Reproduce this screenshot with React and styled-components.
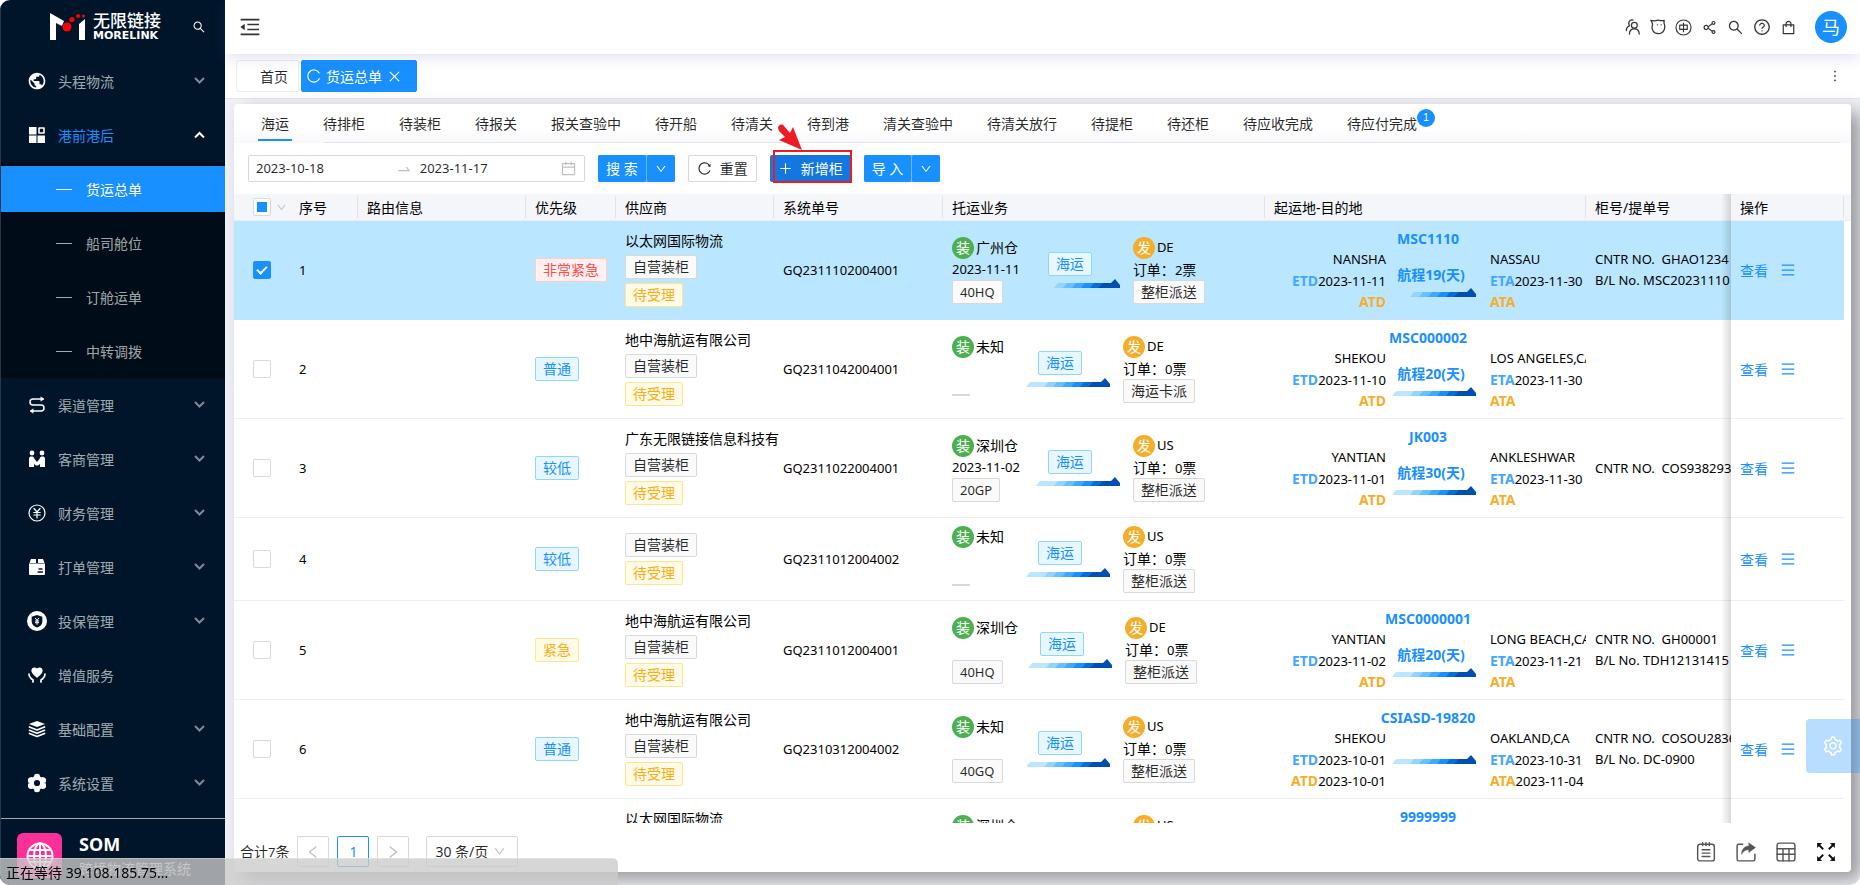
import React, { useEffect, useRef } from 'react';
import styled, { createGlobalStyle, css } from 'styled-components';
import {
  AiOutlineMenuFold, AiOutlineSearch, AiOutlineShareAlt, AiOutlineQuestionCircle, AiOutlineShopping,
  AiOutlineReload, AiOutlineClose, AiOutlinePlus, AiOutlineDown, AiOutlineCalendar, AiOutlineSwapRight,
  AiOutlineMore, AiOutlineSetting, AiOutlineMenu, AiOutlineLeft, AiOutlineRight,
} from 'react-icons/ai';
import { MdPublic } from 'react-icons/md';

const BLUE = '#1890ff';

const Global = createGlobalStyle`
  *, *::before, *::after { box-sizing: border-box; }
  body { margin: 0; background: #fff; font-family: "Noto Sans", "Noto Sans CJK SC", sans-serif; font-size: 14px; line-height: 21px; color: rgba(0,0,0,.85); }
  button, input, select { font: inherit; color: inherit; margin: 0; padding: 0; border: 0; background: none; }
  button { cursor: pointer; }
  a { color: inherit; text-decoration: none; }
  ul { list-style: none; margin: 0; padding: 0; }
  svg { display: block; flex: none; }
`;

const Page = styled.div`
  display: flex;
  height: 100vh;
  overflow: hidden;
  border-radius: 10px;
`;

/* ---------- sidebar ---------- */
const Sidebar = styled.aside`
  flex: none;
  width: 225px;
  display: flex;
  flex-direction: column;
  background: #001529;
  border-left: 1px solid #26384a;
  color: #fff;
`;
const Brand = styled.div`
  display: flex;
  align-items: center;
  height: 54px;
  padding: 0 19px 0 48px;
  gap: 7px;
`;
const BrandText = styled.div`
  flex: 1;
  display: flex;
  flex-direction: column;
  white-space: nowrap;
`;
const BrandName = styled.span`
  font-size: 17px;
  line-height: 18px;
  font-weight: 500;
`;
const BrandLatin = styled.span`
  font: bold 11px/12px "DejaVu Sans", sans-serif;
`;
const Menu = styled.nav`
  flex: 1;
`;
const MenuItem = styled.button`
  display: flex;
  align-items: center;
  width: 100%;
  height: 54px;
  padding: 0 20px 0 26px;
  text-align: left;
  color: ${(p) => (p.$open ? BLUE : 'rgba(255,255,255,.65)')};
`;
const MenuIcon = styled.span`
  display: flex;
  justify-content: center;
  width: 20px;
  margin-right: 11px;
  color: #fff;
`;
const MenuLabel = styled.span`
  flex: 1;
`;
const MenuArrow = styled.span`
  color: ${(p) => (p.$open ? '#fff' : '#7f8a94')};
`;
const SubMenu = styled.ul`
  display: grid;
  gap: 8px;
  padding: 4px 0;
  background: #000c17;
`;
const SubLink = styled.a`
  display: flex;
  align-items: center;
  gap: 14px;
  height: 46px;
  padding-left: 55px;
  color: ${(p) => (p.$active ? '#fff' : 'rgba(255,255,255,.65)')};
  background: ${(p) => (p.$active ? BLUE : 'transparent')};
  &::before {
    content: '';
    width: 16px;
    height: 1px;
    background: currentColor;
  }
`;
const System = styled.div`
  display: flex;
  gap: 17px;
  height: 67px;
  padding: 14px 0 0 16px;
  border-top: 1px solid #a6a6a6;
  white-space: nowrap;
`;
const SystemLogo = styled.div`
  display: grid;
  place-items: center;
  width: 45px;
  height: 45px;
  border-radius: 6px;
  background: #fb3199;
`;
const SystemText = styled.div`
  display: flex;
  flex-direction: column;
  gap: 3px;
`;
const SystemName = styled.strong`
  font-size: 18px;
  line-height: 22px;
`;
const SystemDesc = styled.span`
  color: #b4b8bc;
`;

/* ---------- top area ---------- */
const Main = styled.div`
  flex: 1;
  min-width: 0;
  display: flex;
  flex-direction: column;
  background: #f0f1f6;
`;
const TopBar = styled.header`
  position: relative;
  z-index: 1;
  display: flex;
  align-items: center;
  justify-content: space-between;
  height: 54px;
  padding: 0 13px;
  background: #fff;
  box-shadow: 0 3px 14px rgba(80,80,180,.18);
`;
const TopTools = styled.div`
  display: flex;
  align-items: center;
  gap: 9px;
`;
const IconButton = styled.button`
  display: grid;
  place-items: center;
  color: ${(p) => p.$color || '#333'};
`;
const Avatar = styled.button`
  width: 32px;
  height: 32px;
  margin-left: 9px;
  border-radius: 50%;
  background: ${BLUE};
  color: #fff;
  font-size: 18px;
`;
const PageTabs = styled.nav`
  display: flex;
  align-items: center;
  gap: 2px;
  height: 45px;
  padding: 0 17px 0 11px;
  background: #fff;
  border-bottom: 1px solid #e2e3ee;
`;
const PageTab = styled.a`
  display: flex;
  align-items: center;
  gap: 5px;
  height: 32px;
  border: 1px solid ${(p) => (p.$active ? BLUE : '#ededf2')};
  border-radius: 2px;
  background: ${(p) => (p.$active ? BLUE : '#fff')};
  color: ${(p) => (p.$active ? '#fff' : 'inherit')};
  padding: ${(p) => (p.$active ? '0 14px 0 5px' : '0 10px 0 23px')};
`;
const Spacer = styled.div`
  flex: 1;
`;

/* ---------- card ---------- */
const Card = styled.main`
  flex: 1;
  min-height: 0;
  display: flex;
  flex-direction: column;
  margin: 5px 9px 13px;
  background: #fff;
  border-radius: 4px;
  box-shadow: 10px 8px 18px rgba(0,0,0,.36);
`;
const StatusTabs = styled.div`
  position: relative;
  flex: none;
  display: flex;
  gap: 28px;
  height: 39px;
  padding: 0 24px;
  border-radius: 4px 4px 0 0;
  background: linear-gradient(#fff 60%, #f8f8fb);
  &::after {
    content: '';
    position: absolute;
    left: 90px;
    right: 11px;
    bottom: 0;
    border-bottom: 1px solid #e4e4ee;
  }
`;
const StatusTab = styled.button`
  position: relative;
  height: 37px;
  padding: 4px 3px 0;
  white-space: nowrap;
  border-bottom: 2px solid ${(p) => (p.$active ? BLUE : 'transparent')};
`;
const CountBadge = styled.sup`
  position: absolute;
  top: 5px;
  right: -15px;
  width: 18px;
  height: 18px;
  border-radius: 9px;
  background: ${BLUE};
  color: #fff;
  font: 10px/18px "Liberation Sans", sans-serif;
  text-align: center;
`;
const Toolbar = styled.form`
  flex: none;
  display: flex;
  align-items: center;
  gap: 13px;
  height: 51px;
  padding: 0 14px;
`;
const DateRange = styled.div`
  display: flex;
  align-items: center;
  width: 337px;
  height: 27px;
  padding: 0 7px;
  border: 1px solid #d9d9d9;
  border-radius: 2px;
  color: #bfbfbf;
`;
const DateInput = styled.input`
  flex: 0 1 144px;
  min-width: 0;
  font-size: 13px;
  color: rgba(0,0,0,.85);
  outline: 0;
`;
const RangeArrow = styled.span`
  width: 24px;
`;
const primary = css`
  background: ${(p) => (p.$dark ? '#1277e0' : BLUE)};
  color: #fff;
  box-shadow: 0 2px 0 rgba(0,0,0,.04);
`;
const Button = styled.button`
  display: flex;
  align-items: center;
  justify-content: center;
  height: 27px;
  padding: 0 8px;
  gap: 8px;
  border-radius: 2px;
  white-space: nowrap;
  ${(p) => (p.$primary ? primary : css`border: 1px solid #d9d9d9;`)}
`;
const SplitButton = styled.div`
  display: flex;
  gap: 1px;
  background: #6bb8ff;
  border-radius: 2px;
`;
const Highlighted = styled.div`
  position: relative;
`;
const HighlightFrame = styled.span`
  position: absolute;
  inset: -5px -1px -1px 3px;
  border: 2px solid #ec1c24;
  pointer-events: none;
`;
const Pointer = styled.svg`
  position: absolute;
  left: 8px;
  top: -31px;
  pointer-events: none;
`;

/* ---------- table ---------- */
const TableArea = styled.div`
  flex: 1;
  min-height: 0;
  overflow: hidden;
`;
const Table = styled.table`
  width: 100%;
  table-layout: fixed;
  border-collapse: separate;
  border-spacing: 0;
  color: #000;
`;
const Col = styled.col`
  width: ${(p) => (p.$w ? `${p.$w}px` : 'auto')};
`;
const pinnedEdge = css`
  position: relative;
  &::before {
    content: '';
    position: absolute;
    top: 0;
    bottom: -1px;
    left: -10px;
    width: 10px;
    background: linear-gradient(to right, transparent, rgba(0,0,0,.14));
  }
`;
const Th = styled.th`
  position: relative;
  height: 27px;
  padding: 0 0 0 9px;
  background: #f5f6fa;
  border-bottom: 1px solid #ececf0;
  font-weight: 400;
  text-align: left;
  white-space: nowrap;
  ${(p) => p.$divider && css`
    &::after {
      content: '';
      position: absolute;
      right: 0;
      top: 2px;
      bottom: 2px;
      border-right: 1px solid #e2e3e8;
    }
  `}
  ${(p) => p.$pinned && pinnedEdge}
`;
const Td = styled.td`
  padding: 7px 0 7px 9px;
  border-bottom: 1px solid ${(p) => (p.$selected ? '#bae7ff' : '#efefef')};
  background: ${(p) => (p.$selected ? '#bae7ff' : '#fff')};
  vertical-align: middle;
  white-space: nowrap;
  ${(p) => p.$clip && css`overflow: hidden;`}
  ${(p) => p.$pinned && pinnedEdge}
`;
const GutterCell = styled.td`
  padding: 0;
`;
const Latin = styled.span`
  font-size: 13px;
`;
const CheckCell = styled.div`
  display: flex;
  align-items: center;
  gap: 5px;
  padding-left: 10px;
  color: #bfbfbf;
`;
const Checkbox = styled.input.attrs({ type: 'checkbox' })`
  appearance: none;
  display: grid;
  place-items: center;
  width: 18px;
  height: 18px;
  border: 1px solid #d9d9d9;
  border-radius: 2px;
  background: #fff;
  &:checked { background: ${BLUE}; border-color: ${BLUE}; }
  &:checked::before {
    content: '';
    width: 6px;
    height: 10px;
    margin-bottom: 3px;
    border: solid #fff;
    border-width: 0 2px 2px 0;
    rotate: 45deg;
  }
  &:indeterminate::before {
    content: '';
    width: 10px;
    height: 10px;
    background: ${BLUE};
  }
`;
const TAGS = {
  plain: css`color: rgba(0,0,0,.85); background: #fafafa; border-color: #d9d9d9;`,
  blue: css`color: #1890ff; background: #e6f7ff; border-color: #91d5ff;`,
  red: css`color: #ff4d4f; background: #fff1f0; border-color: #ffccc7;`,
  gold: css`color: #faad14; background: #fffbe6; border-color: #ffe58f;`,
};
const Tag = styled.span`
  display: inline-block;
  height: 24px;
  padding: 0 7px;
  line-height: 22px;
  border: 1px solid;
  border-radius: 2px;
  ${(p) => TAGS[p.$tone || 'plain']}
`;
const Stack = styled.div`
  display: flex;
  flex-direction: column;
  align-items: ${(p) => p.$align || 'flex-start'};
  gap: ${(p) => p.$gap || 0}px;
  min-width: ${(p) => p.$min || 0}px;
`;
const Vendor = styled(Stack)`
  gap: 4px;
  padding-bottom: ${(p) => (p.$named ? 4 : 0)}px;
`;
const Service = styled.div`
  display: flex;
  align-items: center;
`;
const Place = styled.div`
  display: flex;
  align-items: center;
  gap: 2px;
  height: 23px;
  margin-right: -6px;
`;
const Mark = styled.span`
  width: 22px;
  height: 22px;
  border-radius: 50%;
  line-height: 22px;
  text-align: center;
  color: #fff;
  background: ${(p) => p.$color};
`;
const Line = styled.div`
  height: 21px;
  font-size: ${(p) => p.$size || 13}px;
  white-space: pre;
`;
const EmptyTag = styled.div`
  width: 18px;
  height: 2px;
  margin: 15px 0 7px;
  background: #d9d9d9;
`;
const Destination = styled.div`
  padding-left: 13px;
`;
const Voyage = styled.div`
  display: grid;
  grid-template-columns: 112px 104px minmax(0, 1fr);
`;
const VoyageTitle = styled.strong`
  grid-column: 1 / -1;
  padding-right: 4px;
  text-align: center;
  color: ${BLUE};
`;
const VoyageSide = styled.div`
  text-align: ${(p) => p.$align};
`;
const VoyageMid = styled.div`
  display: flex;
  flex-direction: column;
  align-items: center;
  justify-content: center;
  gap: 3px;
  padding-right: 14px;
  color: ${BLUE};
  font-weight: 700;
`;
const ShipInset = styled.span`
  padding-left: 6px;
`;
const Eta = styled.b`
  font-size: 14px;
  color: ${(p) => (p.$actual ? '#f5ae2b' : '#45a6ff')};
`;
const Actions = styled.div`
  display: flex;
  align-items: center;
  gap: 12px;
  color: ${BLUE};
`;

/* ---------- footer ---------- */
const Footer = styled.footer`
  flex: none;
  display: flex;
  align-items: center;
  height: 49px;
  padding: 8px 15px 0 6px;
  gap: 8px;
`;
const PageButton = styled.button`
  display: grid;
  place-items: center;
  width: 32px;
  height: 31px;
  border: 1px solid ${(p) => (p.$active ? BLUE : '#d9d9d9')};
  border-radius: 2px;
  color: ${(p) => (p.$active ? BLUE : '#bfbfbf')};
`;
const PageSize = styled.label`
  display: flex;
  align-items: center;
  width: 92px;
  height: 31px;
  margin-left: 9px;
  padding: 0 11px 0 8px;
  border: 1px solid #d9d9d9;
  border-radius: 2px;
  color: #bfbfbf;
  select { appearance: none; flex: 1; min-width: 0; color: rgba(0,0,0,.85); outline: 0; }
`;
const FooterTools = styled.div`
  display: flex;
  gap: 20px;
  margin-left: auto;
`;
const SettingsHandle = styled.button`
  position: fixed;
  right: 0;
  top: 719px;
  display: grid;
  place-items: center;
  width: 54px;
  height: 54px;
  border-radius: 4px 0 0 4px;
  background: rgba(24,144,255,.3);
  color: #fff;
  z-index: 2;
`;
const BrowserStatus = styled.div`
  position: fixed;
  left: 0;
  bottom: 0;
  width: 618px;
  height: 27px;
  padding-left: 6px;
  line-height: 27px;
  border-top: 1px solid rgba(255,255,255,.3);
  border-radius: 0 5px 0 10px;
  background: rgba(203,203,203,.79);
  color: #000;
  z-index: 3;
`;

/* ---------- drawings ---------- */
const Svg = ({ size = 18, children, ...rest }) => (
  <svg width={size} height={size} viewBox="0 0 18 18" fill="none" stroke="currentColor" strokeWidth="1.3" strokeLinecap="round" strokeLinejoin="round" aria-hidden="true" {...rest}>{children}</svg>
);
const LogoMark = () => (
  <svg width="37" height="30" viewBox="0 0 37 30" aria-hidden="true">
    <path d="M1 1l14 8-2 5-6-3v17H1z" fill="#fff" />
    <path d="M30 12l6-5v21h-6z" fill="#fff" />
    <g fill="#f00"><circle cx="18" cy="15" r="4.5" /><circle cx="23" cy="7.500" r="2.600" /><circle cx="29" cy="4" r="2" /><circle cx="34.500" cy="4" r="1.500" /></g>
  </svg>
);
const GridIcon = () => (
  <Svg stroke="none" fill="currentColor"><path d="M1 1h7.500v7.500H1zM1 9.500h7.500V17H1zM9.500 9.500H17V17H9.500z" /><path d="M11 2h5v5h-5z" fill="none" stroke="currentColor" strokeWidth="1.600" /></Svg>
);
const RouteIcon = () => (
  <Svg strokeWidth="1.500"><path d="M15 3H5a3 3 0 000 6h8a3 3 0 010 6H3" /><path d="M13 1l3 2-3 2zM5 13l-3 2 3 2z" fill="currentColor" strokeWidth=".5" /></Svg>
);
const PartnersIcon = () => (
  <Svg stroke="none" fill="currentColor"><circle cx="4" cy="3" r="2.400" /><circle cx="14" cy="3" r="2.400" /><path d="M1 9c0-2 1-2.500 2.500-2.500S6 7 6.500 9L9 12l2.500-3c.5-2 1.500-2.500 3-2.500S17 7 17 9v8h-5v-3l-2 1.500H8L6 14v3H1z" /></Svg>
);
const YuanIcon = () => (
  <Svg strokeWidth="1.200"><circle cx="9" cy="9" r="8" /><path d="M6 4.500L9 8l3-3.500M9 8v6M5.800 8.500h6.400M5.800 11h6.400" /></Svg>
);
const BoxIcon = () => (
  <Svg stroke="none" fill="currentColor"><path d="M3 1h5v4H1.500zM10 1h5l1.500 4H10zM1 5.500h16V16a1 1 0 01-1 1H2a1 1 0 01-1-1z" /><path d="M11 11h3M10 14h4.500" stroke="#001529" strokeWidth="1.300" /></Svg>
);
const InsuranceIcon = () => (
  <Svg size={20} stroke="none"><circle cx="9" cy="9" r="9" fill="currentColor" /><path d="M9 3.500l4.800 1.700v4c0 3-2 4.600-4.800 5.600-2.800-1-4.800-2.600-4.800-5.600v-4z" fill="#001529" /><path d="M7.500 6.500L9 8.500l1.500-2M9 8.500v3.500M7.500 9h3M7.500 10.500h3" stroke="currentColor" strokeWidth=".9" /></Svg>
);
const CareIcon = () => (
  <Svg><path d="M9 11C6 8.500 4 7 4 4.500 4 2 7.500 1 9 3.500 10.500 1 14 2 14 4.500 14 7 12 8.500 9 11z" fill="currentColor" /><path d="M1 8c0 3 1 4 4 6v2M17 8c0 3-1 4-4 6v2" strokeWidth="1.700" /></Svg>
);
const LayersIcon = () => (
  <Svg stroke="none" fill="currentColor"><path d="M9 1l8 3-8 3-8-3z" /><path d="M1.500 7L9 10l7.500-3M1.500 10.300l7.500 3 7.500-3M1.500 13.500l7.500 3 7.500-3" fill="none" stroke="currentColor" strokeWidth="1.700" /></Svg>
);
const GearIcon = () => (
  <Svg size={20} stroke="none" fill="currentColor">
    <path fillRule="evenodd" d="M9 2.500a6.500 6.500 0 100 13 6.500 6.500 0 000-13zm0 3.700a2.800 2.800 0 110 5.600 2.800 2.800 0 010-5.600z" />
    <path d="M6.500 4V1.500Q9-.2 11.500 1.500V4zM6.500 14v2.500Q9 18.200 11.500 16.500V14zM1 8.500L.8 5.500Q2 3.500 4.500 3.500L6 5 3 9zM17 8.500l.2-3Q16 3.500 13.500 3.500L12 5l3 4zM1 9.500l-.2 3q1.200 2 3.700 2L6 13 3 9zM17 9.500l.2 3q-1.200 2-3.700 2L12 13l3-4z" />
  </Svg>
);
const UsersIcon = () => (
  <Svg size={16} strokeWidth="1.400"><circle cx="10.500" cy="7" r="3.300" /><path d="M5 17c0-4 2-6 5.500-6s5.500 2 5.500 6M9 1.200C5 .5 3.200 4 5 7.300M1.500 13c0-2.500 1.200-4.500 3.500-5.300" /></Svg>
);
const FaceIcon = () => (
  <Svg size={16} strokeWidth="1.400"><path d="M1 1.500c2 .5 4 .6 5.500.3 1.600-.5 3.600-.5 5.200 0 1.500.2 2.800 0 4.300-.3-.2 1.200-.4 2.200-.2 3.300C18 10 15.500 16.500 9.500 16.500S1 11 3 6.300C2.800 4.500 1.800 3 1 1.500z" /><path d="M8.300 6.500h.1M12.500 6.500h.1" /></Svg>
);
const LocaleIcon = () => (
  <Svg size={17} strokeWidth="1.200"><circle cx="9" cy="9" r="8" /><path d="M5 6.500h8v4.500H5zM9 4v10" strokeLinecap="butt" /></Svg>
);
const SpinIcon = () => (
  <Svg size={14} strokeWidth="1.500"><path d="M15.500 5A7.800 7.800 0 1015.800 12.500" /></Svg>
);
const NotesIcon = () => (
  <Svg size={20} strokeWidth="1.300"><rect x="1.500" y="2" width="15" height="15" rx="2" /><path d="M5.500 7h7M5.500 10h7M5.500 13h7M6 .7v2.500M9 .7v2.500M12 .7v2.500" /></Svg>
);
const ExportIcon = () => (
  <Svg size={20} strokeWidth="1.300"><path d="M6 2H2.500Q1 2 1 3.500v12Q1 17 2.500 17h13q1.500 0 1.500-1.500V11" /><path d="M11.500.8L17.500 5l-6 4.500V7C8.500 7 6.800 8 5 11c0-4.500 2.500-7 6.500-7.500z" fill="currentColor" strokeWidth=".4" /></Svg>
);
const SheetIcon = () => (
  <Svg size={20} strokeWidth="1.300"><rect x="1" y="1" width="16" height="16" rx="2" /><path d="M1 6h16M1 11h16M6.300 6v11M11.700 6v11" /></Svg>
);
const ExpandIcon = () => (
  <Svg size={20} stroke="#111" strokeWidth="1.700" strokeLinecap="butt"><path d="M2 2l4.500 4.500M16 2l-4.500 4.500M2 16l4.500-4.500M16 16l-4.500-4.500" /><path d="M1 1h4.500L1 5.500zM17 1v4.500L12.500 1zM1 17v-4.500L5.500 17zM17 17h-4.500l4.500-4.500z" fill="#111" stroke="none" /></Svg>
);
const GlobeIcon = () => (
  <svg width="28" height="28" viewBox="0 0 28 28" fill="none" stroke="#fff" strokeWidth="2" aria-hidden="true"><circle cx="14" cy="14" r="12.500" /><ellipse cx="14" cy="14" rx="6" ry="12.500" /><path d="M14 1.500v25M1.500 14h25M3.500 8h21M3.500 20h21" /></svg>
);
const ChevronIcon = ({ up }) => (
  <svg width="11" height="8" viewBox="0 0 11 8" fill="none" stroke="currentColor" strokeWidth="2" aria-hidden="true"><path d={up ? 'M1 6.500l4.500-4.500L10 6.500' : 'M1 1L5.500 5.500 10 1'} /></svg>
);
const SHIP = ['#bae7ff', '#bae7ff', '#91d5ff', '#69c0ff', '#40a9ff', '#1890ff', '#096dd9'];
const Ship = ({ lead = 16 }) => (
  <svg width={84 + lead} height="9" viewBox={`${-lead} 0 ${84 + lead} 9`} aria-hidden="true">
    {SHIP.map((c, i) => <path key={i} d={`M${i * 9 + 4} 4h11l-5 5H${i * 9}z`} fill={c} />)}
    <path d="M67 4h8L79 0l5 6v3H62z" fill="#0050b3" />
  </svg>
);

/* ---------- data ---------- */
const MENU = [
  ['头程物流', <MdPublic size={20} />],
  ['港前港后', <GridIcon />, ['货运总单', '船司舱位', '订舱运单', '中转调拨']],
  ['渠道管理', <RouteIcon />],
  ['客商管理', <PartnersIcon />],
  ['财务管理', <YuanIcon />],
  ['打单管理', <BoxIcon />],
  ['投保管理', <InsuranceIcon />],
  ['增值服务', <CareIcon />, null, true],
  ['基础配置', <LayersIcon />],
  ['系统设置', <GearIcon />],
];
const STATUS = ['海运', '待排柜', '待装柜', '待报关', '报关查验中', '待开船', '待清关', '待到港', '清关查验中', '待清关放行', '待提柜', '待还柜', '待应收完成', '待应付完成'];
const HEADS = ['序号', '路由信息', '优先级', '供应商', '系统单号', '托运业务', '起运地-目的地', '柜号/提单号'];
const COLS = [56, 68, 168, 90, 158, 169, 322, 321, null, 113, 7];
const ROWS = [
  { level: ['非常紧急', 'red'], vendor: '以太网国际物流', no: 'GQ2311102004001', from: '广州仓', date: '2023-11-11', box: '40HQ', to: 'DE', orders: 2, mode: '整柜派送', ship: 'MSC1110', pol: 'NANSHA', etd: '2023-11-11', days: 19, pod: 'NASSAU', eta: '2023-11-30', cntr: 'GHAO1234', bl: 'MSC20231110' },
  { level: ['普通', 'blue'], vendor: '地中海航运有限公司', no: 'GQ2311042004001', from: '未知', to: 'DE', orders: 0, mode: '海运卡派', ship: 'MSC000002', pol: 'SHEKOU', etd: '2023-11-10', days: 20, pod: 'LOS ANGELES,CA', eta: '2023-11-30' },
  { level: ['较低', 'blue'], vendor: '广东无限链接信息科技有', no: 'GQ2311022004001', from: '深圳仓', date: '2023-11-02', box: '20GP', to: 'US', orders: 0, mode: '整柜派送', ship: 'JK003', pol: 'YANTIAN', etd: '2023-11-01', days: 30, pod: 'ANKLESHWAR', eta: '2023-11-30', cntr: 'COS938293' },
  { level: ['较低', 'blue'], no: 'GQ2311012004002', from: '未知', to: 'US', orders: 0, mode: '整柜派送' },
  { level: ['紧急', 'gold'], vendor: '地中海航运有限公司', no: 'GQ2311012004001', from: '深圳仓', box: '40HQ', to: 'DE', orders: 0, mode: '整柜派送', ship: 'MSC0000001', pol: 'YANTIAN', etd: '2023-11-02', days: 20, pod: 'LONG BEACH,CA', eta: '2023-11-21', cntr: 'GH00001', bl: 'TDH12131415' },
  { level: ['普通', 'blue'], vendor: '地中海航运有限公司', no: 'GQ2310312004002', from: '未知', box: '40GQ', to: 'US', orders: 0, mode: '整柜派送', ship: 'CSIASD-19820', pol: 'SHEKOU', etd: '2023-10-01', atd: '2023-10-01', pod: 'OAKLAND,CA', eta: '2023-10-31', ata: '2023-11-04', cntr: 'COSOU2836', bl: 'DC-0900' },
  { level: ['普通', 'blue'], vendor: '以太网国际物流', no: 'GQ2310302004001', from: '深圳仓', date: '2023-10-30', box: '40HQ', to: 'US', orders: 0, mode: '整柜派送', ship: '9999999', pol: 'YANTIAN', etd: '2023-10-30', pod: 'OAKLAND,CA', eta: '2023-11-20' },
];

function ServiceInfo({ r }) {
  return (
    <Service>
      <Stack $min={58}>
        <Place><Mark $color="#4caf50">装</Mark>{r.from}</Place>
        <Line>{r.date || ' '}</Line>
        {r.box ? <Tag><Latin>{r.box}</Latin></Tag> : <EmptyTag />}
      </Stack>
      <Stack $gap={3} $align="center">
        <Tag $tone="blue">海运</Tag>
        <Ship />
      </Stack>
      <Destination>
        <Place><Mark $color="#f5ae2b">发</Mark><Latin>{r.to}</Latin></Place>
        <Line $size={14}>订单：<Latin>{r.orders}</Latin>票</Line>
        <Tag>{r.mode}</Tag>
      </Destination>
    </Service>
  );
}

function VoyageInfo({ r }) {
  return (
    <Voyage>
      <VoyageTitle>{r.ship}</VoyageTitle>
      <VoyageSide $align="right">
        <Line>{r.pol}</Line>
        <Line><Eta>ETD</Eta>{r.etd}</Line>
        <Line><Eta $actual>ATD</Eta>{r.atd}</Line>
      </VoyageSide>
      <VoyageMid>
        {r.days && <span>航程{r.days}(天)</span>}
        <ShipInset><Ship lead={0} /></ShipInset>
      </VoyageMid>
      <VoyageSide $align="left">
        <Line>{r.pod}</Line>
        <Line><Eta>ETA</Eta>{r.eta}</Line>
        <Line><Eta $actual>ATA</Eta>{r.ata}</Line>
      </VoyageSide>
    </Voyage>
  );
}

function Row({ r, index }) {
  const selected = index === 0;
  const cell = { $selected: selected };
  return (
    <tr>
      <Td {...cell}><CheckCell><Checkbox defaultChecked={selected} aria-label={`选择 ${index + 1}`} /></CheckCell></Td>
      <Td {...cell}><Latin>{index + 1}</Latin></Td>
      <Td {...cell} />
      <Td {...cell}><Tag $tone={r.level[1]}>{r.level[0]}</Tag></Td>
      <Td {...cell}>
        <Vendor $named={!!r.vendor}>
          {r.vendor && <span>{r.vendor}</span>}
          <Tag>自营装柜</Tag>
          <Tag $tone="gold">待受理</Tag>
        </Vendor>
      </Td>
      <Td {...cell}><Latin>{r.no}</Latin></Td>
      <Td {...cell}><ServiceInfo r={r} /></Td>
      <Td {...cell} $clip>{r.ship && <VoyageInfo r={r} />}</Td>
      <Td {...cell} $clip>
        {r.cntr && <Line>{`CNTR NO.  ${r.cntr}`}</Line>}
        {r.bl && <Line>{`B/L No. ${r.bl}`}</Line>}
      </Td>
      <Td {...cell} $pinned>
        <Actions><a href="#view">查看</a><IconButton type="button" $color={BLUE} aria-label="更多"><AiOutlineMenu size={16} /></IconButton></Actions>
      </Td>
      <GutterCell />
    </tr>
  );
}

export default function App() {
  const all = useRef(null);
  useEffect(() => { all.current.indeterminate = true; }, []);
  return (
    <>
      <Global />
      <Page>
        <Sidebar>
          <Brand>
            <LogoMark />
            <BrandText><BrandName>无限链接</BrandName><BrandLatin>MORELINK</BrandLatin></BrandText>
            <IconButton $color="#fff" aria-label="搜索菜单"><AiOutlineSearch size={14} /></IconButton>
          </Brand>
          <Menu>
            {MENU.map(([label, icon, subs, leaf]) => (
              <React.Fragment key={label}>
                <MenuItem type="button" $open={!!subs}>
                  <MenuIcon>{icon}</MenuIcon>
                  <MenuLabel>{label}</MenuLabel>
                  {!leaf && <MenuArrow $open={!!subs}><ChevronIcon up={!!subs} /></MenuArrow>}
                </MenuItem>
                {subs && (
                  <SubMenu>
                    {subs.map((s, i) => <li key={s}><SubLink href="#menu" $active={i === 0}>{s}</SubLink></li>)}
                  </SubMenu>
                )}
              </React.Fragment>
            ))}
          </Menu>
          <System>
            <SystemLogo><GlobeIcon /></SystemLogo>
            <SystemText><SystemName>SOM</SystemName><SystemDesc>跨境物流管理系统</SystemDesc></SystemText>
          </System>
        </Sidebar>
        <Main>
          <TopBar>
            <IconButton aria-label="收起菜单"><AiOutlineMenuFold size={24} /></IconButton>
            <TopTools>
              <IconButton aria-label="用户"><UsersIcon /></IconButton>
              <IconButton aria-label="消息"><FaceIcon /></IconButton>
              <IconButton aria-label="语言"><LocaleIcon /></IconButton>
              <IconButton aria-label="分享"><AiOutlineShareAlt size={17} /></IconButton>
              <IconButton aria-label="搜索"><AiOutlineSearch size={17} /></IconButton>
              <IconButton aria-label="帮助"><AiOutlineQuestionCircle size={18} /></IconButton>
              <IconButton aria-label="应用"><AiOutlineShopping size={17} /></IconButton>
              <Avatar>马</Avatar>
            </TopTools>
          </TopBar>
          <PageTabs>
            <PageTab href="#home">首页</PageTab>
            <PageTab href="#list" $active><SpinIcon />货运总单<AiOutlineClose size={15} /></PageTab>
            <Spacer />
            <IconButton aria-label="更多"><AiOutlineMore size={16} /></IconButton>
          </PageTabs>
          <Card>
            <StatusTabs>
              {STATUS.map((s, i) => (
                <StatusTab key={s} $active={i === 0}>{s}{i === STATUS.length - 1 && <CountBadge>1</CountBadge>}</StatusTab>
              ))}
            </StatusTabs>
            <Toolbar onSubmit={(e) => e.preventDefault()}>
              <DateRange>
                <DateInput aria-label="开始日期" defaultValue="2023-10-18" />
                <RangeArrow><AiOutlineSwapRight size={16} /></RangeArrow>
                <DateInput aria-label="结束日期" defaultValue="2023-11-17" />
                <AiOutlineCalendar size={17} />
              </DateRange>
              <SplitButton>
                <Button $primary>搜 索</Button>
                <Button $primary type="button" aria-label="更多搜索"><AiOutlineDown size={12} /></Button>
              </SplitButton>
              <Button type="button"><AiOutlineReload size={15} />重置</Button>
              <Highlighted>
                <Button type="button" $primary $dark><AiOutlinePlus size={15} />新增柜</Button>
                <HighlightFrame />
                <Pointer width="26" height="28" viewBox="0 0 26 28" aria-hidden="true"><path d="M0 4C0 1 4-1 6 2l6 7 3-6 9 23-23-10 6-3-6-6z" fill="#ec1c24" /></Pointer>
              </Highlighted>
              <SplitButton>
                <Button $primary type="button">导 入</Button>
                <Button $primary type="button" aria-label="更多导入"><AiOutlineDown size={12} /></Button>
              </SplitButton>
            </Toolbar>
            <TableArea>
              <Table>
                <colgroup>{COLS.map((w, i) => <Col key={i} $w={w} />)}</colgroup>
                <thead>
                  <tr>
                    <Th><CheckCell><Checkbox ref={all} aria-label="全选" /><AiOutlineDown size={11} /></CheckCell></Th>
                    {HEADS.map((h, i) => <Th key={h} $divider={i < HEADS.length - 1}>{h}</Th>)}
                    <Th $pinned $divider>操作</Th>
                    <Th />
                  </tr>
                </thead>
                <tbody>{ROWS.map((r, i) => <Row key={r.no} r={r} index={i} />)}</tbody>
              </Table>
            </TableArea>
            <Footer>
              <span>合计<Latin>7</Latin>条</span>
              <PageButton aria-label="上一页"><AiOutlineLeft size={16} /></PageButton>
              <PageButton $active>1</PageButton>
              <PageButton aria-label="下一页"><AiOutlineRight size={16} /></PageButton>
              <PageSize>
                <select aria-label="每页条数"><option>30 条/页</option></select>
                <AiOutlineDown size={13} />
              </PageSize>
              <FooterTools>
                <IconButton $color="#555" aria-label="日志"><NotesIcon /></IconButton>
                <IconButton $color="#555" aria-label="导出"><ExportIcon /></IconButton>
                <IconButton $color="#555" aria-label="列设置"><SheetIcon /></IconButton>
                <IconButton aria-label="全屏"><ExpandIcon /></IconButton>
              </FooterTools>
            </Footer>
          </Card>
        </Main>
      </Page>
      <SettingsHandle aria-label="页面设置"><AiOutlineSetting size={22} /></SettingsHandle>
      <BrowserStatus role="status">正在等待 39.108.185.75...</BrowserStatus>
    </>
  );
}
